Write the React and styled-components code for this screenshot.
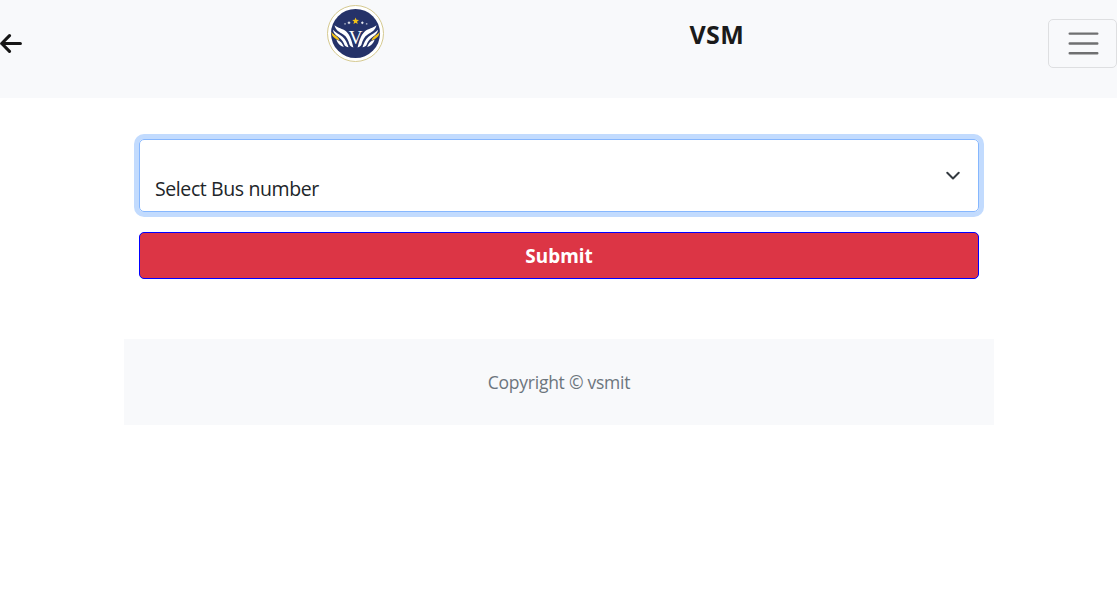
import React from "react";
import styled, { createGlobalStyle } from "styled-components";

const GlobalStyle = createGlobalStyle`
  *, *::before, *::after { box-sizing: border-box; }
  body {
    margin: 0;
    background: #fff;
    color: #212529;
    font-family: "Open Sans", "Noto Sans", sans-serif;
    font-size: 19px;
    line-height: 30px;
  }
`;

const Header = styled.header`
  display: grid;
  grid-template-columns: 327px 57px 1fr 69px;
  height: 98px;
  background: #f8f9fb;
`;

const BackLink = styled.a`
  display: flex;
  height: 24px;
  margin-top: 31px;
`;

const Logo = styled.svg`
  width: 57px;
  height: 57px;
  margin-top: 5px;
`;

const Brand = styled.div`
  padding: 19px 0 0 305.5px;
  font-family: "Noto Sans", sans-serif;
  font-size: 25px;
  font-weight: 700;
  letter-spacing: 0.3px;
  color: #1a1a1a;
`;

const Toggler = styled.button`
  display: flex;
  align-items: center;
  width: 69px;
  height: 49px;
  margin-top: 19px;
  padding: 0 0 0 15px;
  background: transparent;
  border: 1px solid #dedfe1;
  border-radius: 5px;
`;

const Container = styled.main`
  width: 870px;
  margin: 0 auto 0 124px;
`;

const Form = styled.form`
  display: flex;
  flex-direction: column;
  gap: 20px;
  padding: 41px 15px 60px;
`;

const Select = styled.div`
  display: flex;
  align-items: center;
  justify-content: space-between;
  height: 73px;
  padding: 0 15px;
  border: 1px solid #86b7fe;
  border-radius: 5px;
  box-shadow: 0 0 0 5px #c2dbfe;
`;

const SelectText = styled.span`
  padding-top: 27px;
  font-size: 19.5px;
  letter-spacing: -0.4px;
`;

const Submit = styled.button`
  height: 47px;
  padding: 0;
  border: 1px solid #0000ff;
  border-radius: 5px;
  background: #dc3545;
  color: #fff;
  font: 700 19px/30px "Noto Sans", sans-serif;
`;

const Footer = styled.footer`
  height: 86px;
  padding-top: 28px;
  background: #f8f9fb;
  color: #6c757d;
  font-size: 17.5px;
  letter-spacing: -0.25px;
  text-align: center;
`;

function Wing() {
  return (
    <g>
      <g fill="#fff">
        <path d="M7.500 20.300C11 23.500 15.500 23.300 19 26.300c4 3.500 5.500 9 7.400 16.200-1.800-.3-2.900-1.200-3.800-2.700-1.200-4.600-3-8-6.300-10.200-4-2.600-7.600-4-8.800-9.300z" />
        <path d="M6 24.800c2.500 3.200 6.500 4.400 9.500 7 3.200 2.800 4.600 6.300 6 10.400-1.800-.2-3-1-4-2.300-1-2.600-2.300-4.700-4.500-6.600C9.500 30.500 6.500 29 6 24.800z" />
        <path d="M9.300 34.600c2.300 1 4 1.700 5.200 3.200 1 1.200 1.700 2.500 2.300 4.200-3.700-.9-6.500-3.700-7.500-7.400z" />
      </g>
      <path fill="#f3c316" d="M4.300 26.800c1.600 2.700 4.600 3.700 6.500 5.700 1 1 1.500 2 1.800 3.300-3.300-1.800-7.900-2.900-8.300-9z" />
    </g>
  );
}

export default function App() {
  return (
    <>
      <GlobalStyle />
      <Header>
        <BackLink aria-label="Back">
          <svg width="24" height="24" viewBox="0 0 24 24" fill="none" stroke="#161616" strokeWidth="3.1" strokeLinecap="round" strokeLinejoin="round">
            <path d="M9.500 4.700 1.700 12.500l7.800 7.800M1.700 12.500h18.700" />
          </svg>
        </BackLink>
        <Logo viewBox="0 0 57 57" aria-label="VSM logo">
          <circle cx="28.500" cy="28.500" r="28" fill="#fff" stroke="#d5c98f" />
          <circle cx="28.500" cy="28.500" r="24.500" fill="#253269" />
          <Wing />
          <g transform="translate(57 0) scale(-1 1)"><Wing /></g>
          <path fill="#f3c316" d="m28.600 12.500.9 2.300 2.500.2-1.900 1.600.6 2.500-2.100-1.400-2.100 1.400.6-2.500-1.900-1.600 2.500-.2z" />
          <path stroke="#fff" strokeWidth="0.9" d="M22 16.500v2.600M20.700 17.800h2.600M35.300 16.500v2.600M34 17.800h2.600M17.300 18.900h1.500M38.900 18.900h1.500" />
          <text x="28.500" y="38.800" fill="#fff" stroke="#253269" strokeWidth="1.500" paintOrder="stroke" fontFamily="Liberation Serif, serif" fontSize="19" textAnchor="middle">V</text>
        </Logo>
        <Brand>VSM</Brand>
        <Toggler type="button" aria-label="Menu">
          <svg width="38" height="38" viewBox="0 0 38 38" stroke="#6f7071" strokeWidth="2.400" strokeLinecap="round">
            <path d="M5.700 8.600h27.600M5.700 18.500h27.600M5.700 28.300h27.600" />
          </svg>
        </Toggler>
      </Header>
      <Container>
        <Form>
          <Select tabIndex={0} role="combobox">
            <SelectText>Select Bus number</SelectText>
            <svg width="20" height="20" viewBox="0 0 16 16" fill="none" stroke="#343a40" strokeWidth="1.600" strokeLinecap="round" strokeLinejoin="round">
              <path d="m3.400 5.400 4.600 4.600 4.600-4.600" />
            </svg>
          </Select>
          <Submit type="button">Submit</Submit>
        </Form>
        <Footer>Copyright © vsmit</Footer>
      </Container>
    </>
  );
}
